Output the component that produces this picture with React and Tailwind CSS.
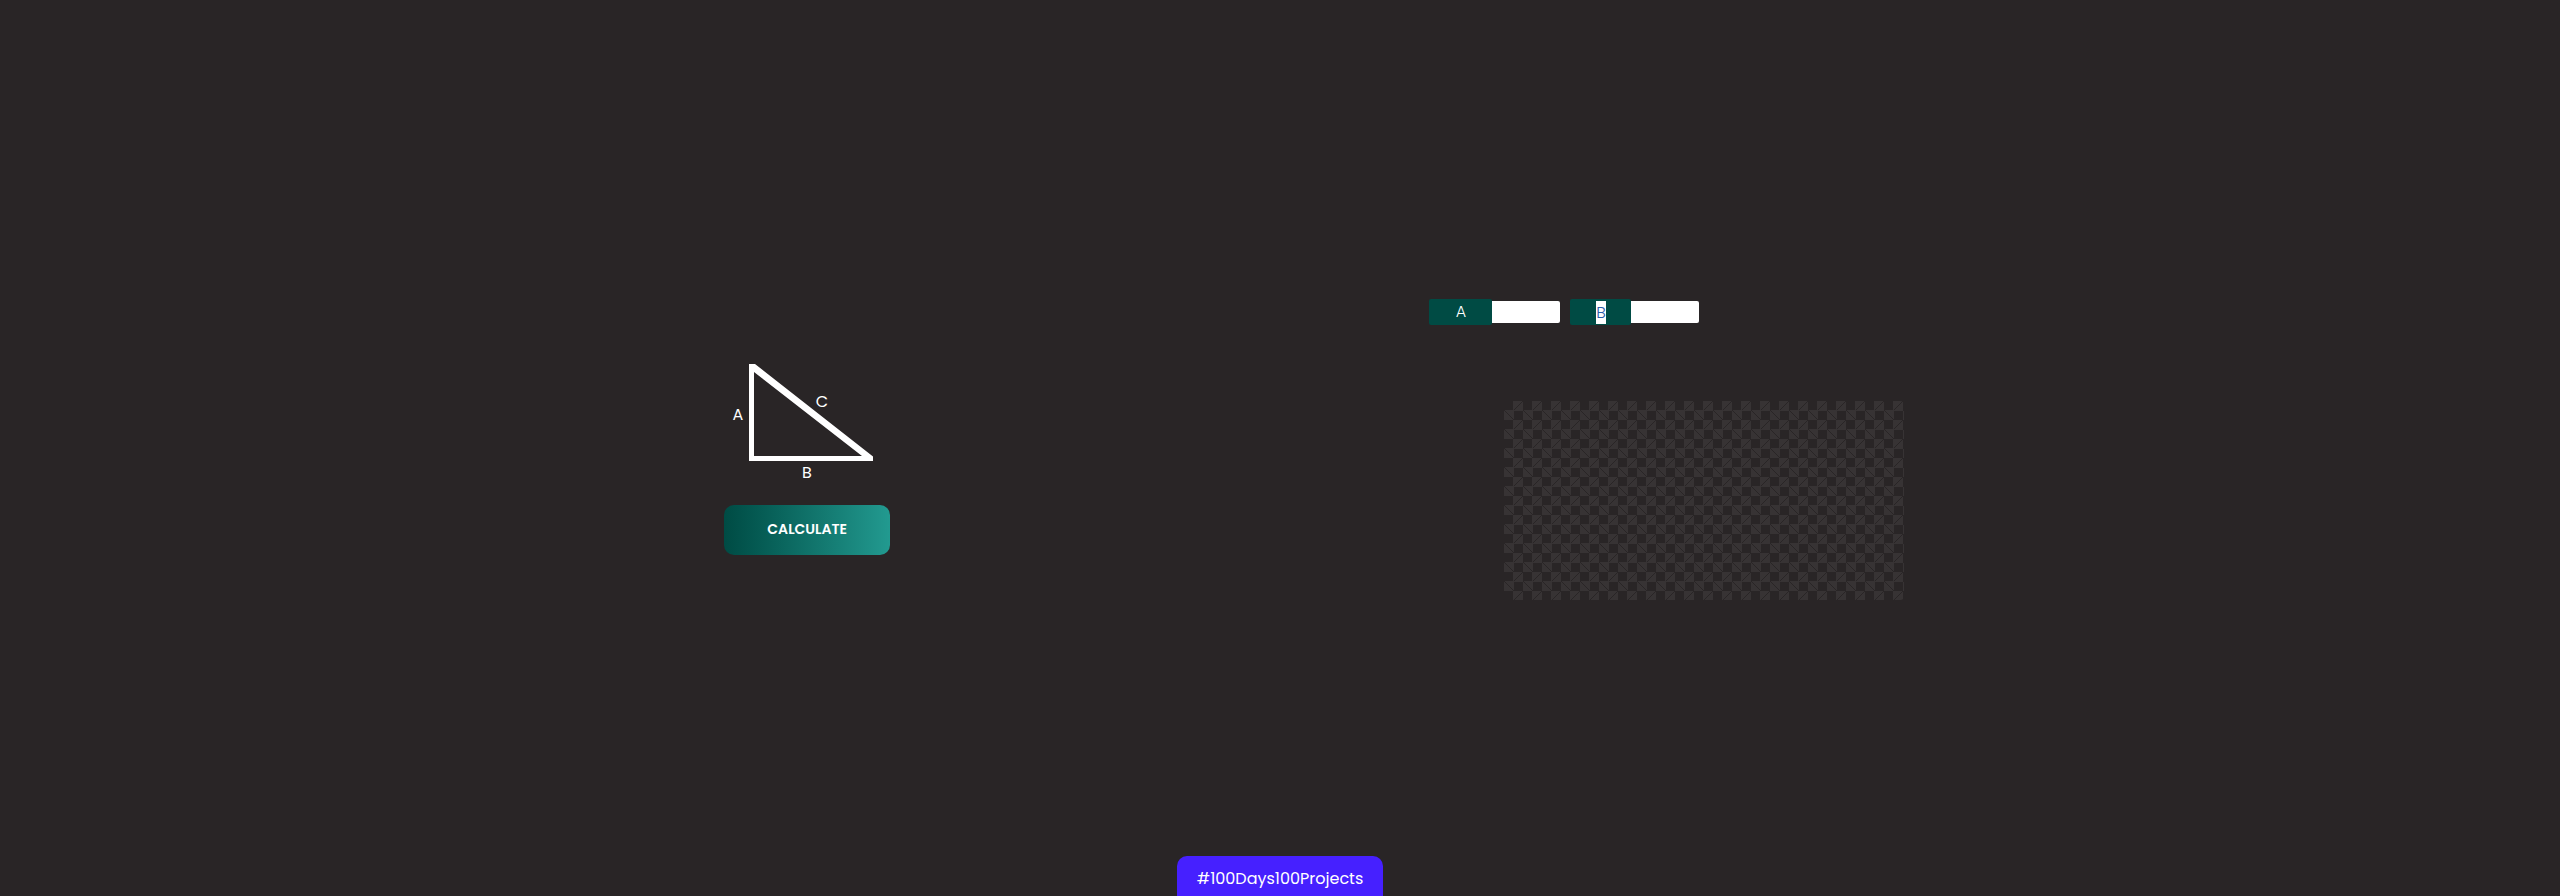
const CHECKER =
  "bg-[linear-gradient(45deg,#373334_25%,transparent_25%),linear-gradient(-45deg,#373334_25%,transparent_25%),linear-gradient(45deg,transparent_75%,#373334_75%),linear-gradient(-45deg,transparent_75%,#373334_75%)] bg-size-[19px_19px] bg-position-[0_0,0_10px,10px_-10px,-10px_0]";

function Field({ id, label, selected, width }) {
  return (
    <div className="flex items-center">
      <label htmlFor={id} className={"flex h-[26px] items-center justify-center rounded-xs bg-[#004b44] text-base font-light " + width}>
        {selected ? <span className="bg-white leading-[23px] text-[#2a5caa]">{label}</span> : label}
      </label>
      <input id={id} type="text" className="h-[22px] w-[68px] rounded-r-xs bg-white px-1 text-sm text-black outline-none" />
    </div>
  );
}

export default function App() {
  return (
    <div className="flex min-h-screen flex-col bg-[#292526] font-[Poppins,Inter,sans-serif] text-white">
      <main className="grid grow grid-cols-[35fr_37fr] px-[360px] pt-[299px]">
        <section className="flex flex-col items-center pt-[65px]">
          <svg className="h-[124px] w-[166px]" viewBox="0 0 166 124" role="img" aria-label="Right triangle">
            <path d="M25 0h6L149 92.500V97H25z M30 8v84h108z" fill="#fff" fillRule="evenodd" />
            <g fill="#fff" fontSize="16" textAnchor="middle">
              <text x="14" y="56">A</text>
              <text x="98" y="43">C</text>
              <text x="83" y="114">B</text>
            </g>
          </svg>
          <button className="mt-[17px] h-[50px] w-[166px] rounded-[10px] bg-linear-to-r from-[#004b44] to-[#229a90] pb-0.5 text-sm font-semibold">
            CALCULATE
          </button>
        </section>
        <section className="flex flex-col items-start gap-[76px] pl-[175px]">
          <form className="flex gap-[10px]">
            <Field id="side-a" label="A" width="w-[63px]" />
            <Field id="side-b" label="B" width="w-[61px]" selected />
          </form>
          <div className={"ml-[75px] h-[199px] w-[400px] rounded-[4px] " + CHECKER} />
        </section>
      </main>
      <footer className="flex justify-center">
        <a href="#projects" className="flex h-10 items-center rounded-t-[10px] bg-[#4620ff] px-5 pt-1.5 text-base">
          #100Days100Projects
        </a>
      </footer>
    </div>
  );
}
